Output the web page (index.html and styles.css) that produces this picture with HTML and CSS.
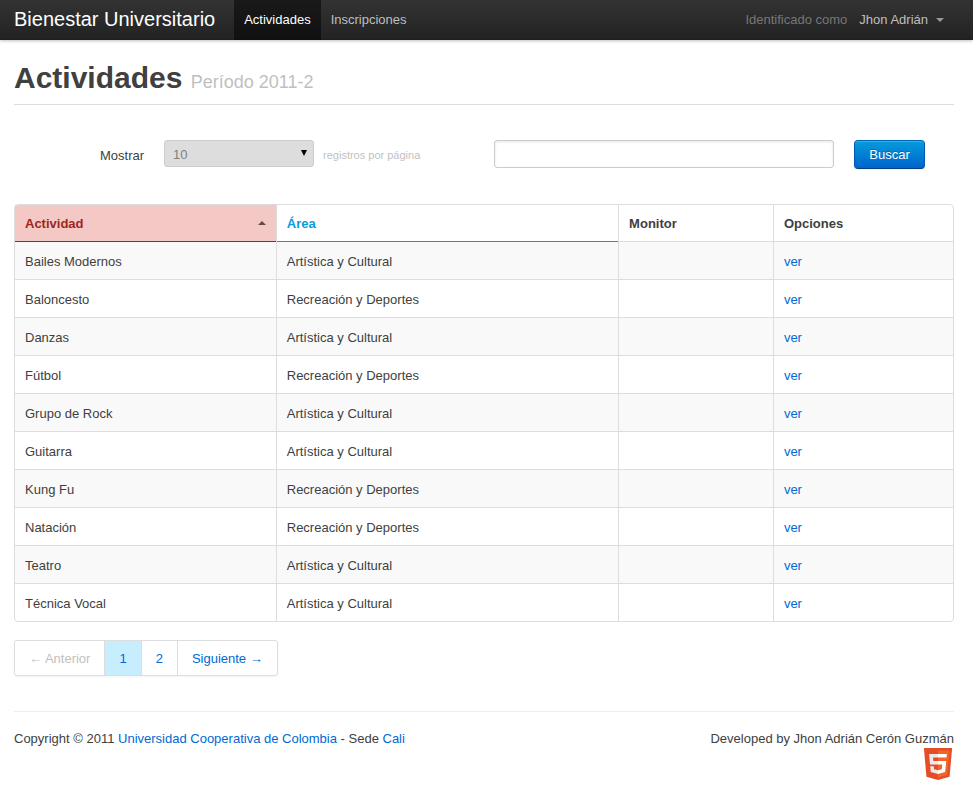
FILE: index.html
```html
<!DOCTYPE html>
<html lang="es">
<head>
<meta charset="utf-8">
<title>Bienestar Universitario</title>
<link rel="stylesheet" href="styles.css">
</head>
<body>
<header class="topbar">
  <div class="container topbar-inner">
    <a class="brand" href="#">Bienestar Universitario</a>
    <nav class="nav">
      <a class="nav-link active" href="#">Actividades</a>
      <a class="nav-link" href="#">Inscripciones</a>
    </nav>
    <div class="user">
      <span class="user-label">Identificado como</span>
      <a class="user-menu" href="#">Jhon Adrián</a>
    </div>
  </div>
</header>
<main class="container">
  <div class="page-header">
    <h1>Actividades <small>Período 2011-2</small></h1>
  </div>
  <form class="filters">
    <label class="length-label" for="length">Mostrar</label>
    <span class="select-wrap">
      <select id="length" class="length-select">
        <option>10</option>
        <option>25</option>
        <option>50</option>
      </select>
    </span>
    <span class="help">registros por página</span>
    <input class="search" type="text" aria-label="Buscar actividades">
    <button class="btn" type="submit">Buscar</button>
  </form>
  <table class="grid">
    <colgroup><col class="col-activity"><col class="col-area"><col class="col-monitor"><col></colgroup>
    <thead>
      <tr><th class="sorted">Actividad</th><th class="sortable">Área</th><th>Monitor</th><th>Opciones</th></tr>
    </thead>
    <tbody>
      <tr><td>Bailes Modernos</td><td>Artística y Cultural</td><td></td><td><a href="#">ver</a></td></tr>
      <tr><td>Baloncesto</td><td>Recreación y Deportes</td><td></td><td><a href="#">ver</a></td></tr>
      <tr><td>Danzas</td><td>Artística y Cultural</td><td></td><td><a href="#">ver</a></td></tr>
      <tr><td>Fútbol</td><td>Recreación y Deportes</td><td></td><td><a href="#">ver</a></td></tr>
      <tr><td>Grupo de Rock</td><td>Artística y Cultural</td><td></td><td><a href="#">ver</a></td></tr>
      <tr><td>Guitarra</td><td>Artística y Cultural</td><td></td><td><a href="#">ver</a></td></tr>
      <tr><td>Kung Fu</td><td>Recreación y Deportes</td><td></td><td><a href="#">ver</a></td></tr>
      <tr><td>Natación</td><td>Recreación y Deportes</td><td></td><td><a href="#">ver</a></td></tr>
      <tr><td>Teatro</td><td>Artística y Cultural</td><td></td><td><a href="#">ver</a></td></tr>
      <tr><td>Técnica Vocal</td><td>Artística y Cultural</td><td></td><td><a href="#">ver</a></td></tr>
    </tbody>
  </table>
  <nav class="pagination" aria-label="Páginas">
    <a class="page disabled" href="#">← Anterior</a>
    <a class="page current" href="#">1</a>
    <a class="page" href="#">2</a>
    <a class="page" href="#">Siguiente →</a>
  </nav>
  <footer class="footer">
    <p>Copyright © 2011 <a href="#">Universidad Cooperativa de Colombia</a> - Sede <a href="#">Cali</a></p>
    <div class="credits">
      <p>Developed by Jhon Adrián Cerón Guzmán</p>
      <svg class="html5" viewBox="0 0 512 512" preserveAspectRatio="none" role="img" aria-label="HTML5">
        <path fill="#e44d26" d="M30 0H482L441 460L256 512L71 460Z"/>
        <path fill="#f16529" d="M256 38V472L405 430L441 38Z"/>
        <path fill="#ebebeb" d="M256 208H181L176 150H256V94H114L129 265H256ZM256 355L193 338L189 293H132L140 382L256 414Z"/>
        <path fill="#fff" d="M255 208V265H325L318 338L255 355V414L371 382L387 208ZM255 94V150H392L397 94Z"/>
      </svg>
    </div>
  </footer>
</main>
</body>
</html>
```

FILE: styles.css
```css
* {
  box-sizing: border-box;
}

body {
  margin: 0;
  background: #fff;
  color: #404040;
  font: 13px/18px "Liberation Sans", Arial, sans-serif;
}

a {
  color: #0069d6;
  text-decoration: none;
}

p {
  margin: 0;
}

.container {
  padding: 0 19px 0 14px;
}

.topbar {
  background: linear-gradient(#333, #222);
  box-shadow: 0 1px 3px rgba(0, 0, 0, 0.25), inset 0 -1px 0 rgba(0, 0, 0, 0.1);
}

.topbar-inner {
  display: flex;
  height: 40px;
  line-height: 40px;
}

.brand {
  margin-right: 19px;
  color: #fff;
  font-size: 20px;
  line-height: 38px;
}

.nav {
  display: flex;
}

.nav-link {
  padding: 0 10px;
  color: #bfbfbf;
}

.nav-link.active {
  background: rgba(0, 0, 0, 0.5);
  color: #fff;
}

.user {
  display: flex;
  gap: 12px;
  margin-left: auto;
  padding-right: 10px;
}

.user-label {
  color: #777;
}

.user-menu {
  display: flex;
  align-items: center;
  gap: 8px;
  color: #bfbfbf;
}

.user-menu::after {
  content: "";
  border: 4px solid transparent;
  border-top-color: #999;
  border-bottom: 0;
}

.page-header {
  margin-top: 20px;
  padding-bottom: 4px;
  border-bottom: 1px solid #ddd;
}

h1 {
  margin: 0;
  font-size: 30px;
  line-height: 36px;
}

h1 small {
  color: #bfbfbf;
  font-size: 18px;
  font-weight: normal;
}

.filters {
  display: flex;
  align-items: flex-start;
  margin: 35px 29px 35px 86px;
  line-height: 18px;
}

.length-label {
  padding: 7px 0 0;
}

.select-wrap {
  position: relative;
  width: 150px;
  margin: 0 9px 0 20px;
}

.select-wrap::after {
  content: "";
  position: absolute;
  top: 10px;
  right: 7px;
  border: 3px solid transparent;
  border-top: 6px solid #000;
  border-bottom: 0;
  pointer-events: none;
}

.length-select {
  display: block;
  width: 100%;
  height: 27px;
  padding: 2px 8px 0;
  appearance: none;
  border: 1px solid #ccc;
  border-radius: 3px;
  background: #ddd;
  color: #808080;
  font: inherit;
}

.help {
  padding-top: 6px;
  color: #bfbfbf;
  font-size: 11px;
}

.search {
  width: 340px;
  height: 28px;
  margin: 0 20px 0 auto;
  padding: 4px;
  border: 1px solid #ccc;
  border-radius: 3px;
  box-shadow: inset 0 1px 3px rgba(0, 0, 0, 0.1);
  font: inherit;
}

.btn {
  min-width: 71px;
  height: 29px;
  padding: 0 14px;
  border: 1px solid #0064cd;
  border-color: #0064b0 #0058b0 #003f81;
  border-radius: 4px;
  background: linear-gradient(#049cdb, #0064cd);
  box-shadow: inset 0 1px 0 rgba(255, 255, 255, 0.2), 0 1px 2px rgba(0, 0, 0, 0.05);
  color: #fff;
  font: inherit;
  text-shadow: 0 -1px 0 rgba(0, 0, 0, 0.25);
}

.grid {
  width: 100%;
  table-layout: fixed;
  border: 1px solid #ddd;
  border-radius: 4px;
  border-collapse: separate;
  border-spacing: 0;
}

.col-activity {
  width: 27.8%;
}

.col-area {
  width: 36.5%;
}

.col-monitor {
  width: 16.5%;
}

.grid th,
.grid td {
  height: 38px;
  padding: 10px 10px 8px;
  border-bottom: 1px solid #ddd;
  text-align: left;
}

.grid th {
  height: 37px;
}

.grid th + th,
.grid td + td {
  border-left: 1px solid #ddd;
}

.grid tbody tr:last-child td {
  height: 37px;
  border-bottom: 0;
}

.grid tbody tr:nth-child(odd) td {
  background: #f9f9f9;
}

.grid .sorted,
.grid .sortable {
  padding-bottom: 9px;
  border-bottom: 0;
}

.grid .sorted {
  position: relative;
  border-top-left-radius: 3px;
  background: #f4c8c5;
  box-shadow: inset 0 -1px 0 #9d261d;
  color: #9d261d;
}

.sorted::after {
  content: "";
  position: absolute;
  top: 16px;
  right: 10px;
  border: 4px solid transparent;
  border-top: 0;
  border-bottom-color: #634a49;
}

.grid .sortable {
  box-shadow: inset 0 -1px 0 #1c94c4;
  color: #049cdb;
}

.pagination {
  display: inline-flex;
  margin: 18px 0 35px;
  border: 1px solid #ddd;
  border-radius: 3px;
  box-shadow: 0 1px 2px rgba(0, 0, 0, 0.05);
  line-height: 32px;
}

.page {
  padding: 2px 14px 0;
}

.page + .page {
  border-left: 1px solid #ddd;
}

.page.disabled {
  color: #bfbfbf;
}

.page.current {
  background: #c7eefe;
}

.footer {
  display: flex;
  justify-content: space-between;
  padding-top: 18px;
  border-top: 1px solid #eee;
}

.credits {
  text-align: right;
}

.html5 {
  display: block;
  width: 32px;
  height: 32px;
  margin-left: auto;
}
```
